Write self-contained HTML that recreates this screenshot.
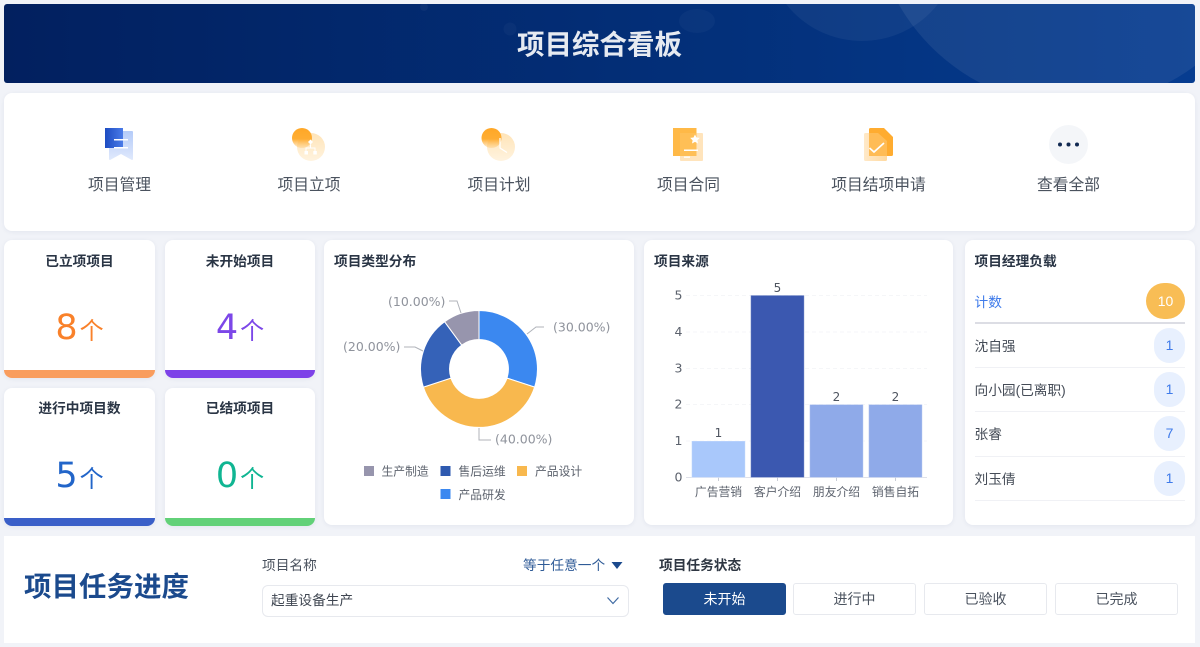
<!DOCTYPE html>
<html lang="zh"><head><meta charset="utf-8"><title>项目综合看板</title>
<style>
*{box-sizing:border-box}
html,body{margin:0;padding:0;width:1200px;height:647px;overflow:hidden;background:#f1f3f8;font-family:"Liberation Sans","Noto Sans CJK SC",sans-serif;color:#2b3644}
.a{position:absolute}
.box{position:absolute;background:#fff;border-radius:8px;box-shadow:0 1px 5px rgba(40,60,110,.07);overflow:hidden}
.t{position:absolute;white-space:nowrap;line-height:20px}
.ttl{font-size:13.7px;font-weight:700;color:#2a3545}
.nav{position:absolute;top:176px;width:140px;text-align:center;font-size:15.75px;line-height:20px;color:#4a525e}
.card .ttl{position:absolute;left:0;right:0;top:11px;text-align:center;line-height:20px}
.card .num{position:absolute;left:0;right:0;top:58px;text-align:center;font-size:35px;line-height:60px;font-family:"DejaVu Sans","Noto Sans CJK SC",sans-serif;font-weight:400;white-space:nowrap}
.card .num span{font-family:"Noto Sans CJK SC",sans-serif;font-size:24px;margin-left:2px;font-weight:400}
.card .bar{position:absolute;left:0;right:0;bottom:0;height:8px}
.row{position:absolute;left:9.5px;width:210.5px;height:44px;border-bottom:1px solid #f0f1f5;font-size:13.7px;line-height:46px;color:#454c57;white-space:nowrap}
.pill{position:absolute;right:0;top:4px;width:31px;height:35px;border-radius:16px;background:#e8f0fe;color:#3f7bea;font-size:14px;line-height:35px;text-align:center}
.btn{position:absolute;top:583px;width:123px;height:32px;border:1px solid #e7e9ee;border-radius:3px;background:#fff;text-align:center;font-size:14px;line-height:30px;color:#4a525e}
</style></head><body>

<div class="a" style="left:4px;top:4px;width:1191px;height:79px;border-radius:3px;overflow:hidden;background:linear-gradient(90deg,#02205f 0%,#03307a 60%,#063c90 100%)">
<svg class="a" style="left:0;top:0" width="1191" height="79" viewBox="0 0 1191 79">
<circle cx="858" cy="-59.600" r="96.600" fill="#fff" opacity=".05"/>
<circle cx="1070" cy="-100" r="202" fill="#fff" opacity=".07"/>
<ellipse cx="693" cy="17" rx="18" ry="12" fill="#fff" opacity=".03"/>
<circle cx="506" cy="25" r="6.500" fill="#fff" opacity=".03"/>
<circle cx="420" cy="3" r="4" fill="#fff" opacity=".04"/>
</svg>
<div class="t" style="left:0;width:1191px;top:23px;line-height:36px;text-align:center;font-size:27.5px;font-weight:700;color:#e6eaf1">项目综合看板</div>
</div>

<div class="box" style="left:4px;top:93px;width:1191px;height:138px"></div>

<svg class="a" style="left:0;top:0;z-index:2" width="1200" height="200" viewBox="0 0 1200 200">
<defs>
<linearGradient id="g1" x1="0" y1="0" x2="1" y2="0"><stop offset="0" stop-color="#1d4cc2"/><stop offset="1" stop-color="#4a7be8"/></linearGradient>
<linearGradient id="g2" x1="0" y1="0" x2="0" y2="1"><stop offset="0" stop-color="#b4cbf9"/><stop offset="1" stop-color="#e0e9fc"/></linearGradient>
<linearGradient id="g3" x1="0" y1="0" x2="0" y2="1"><stop offset="0" stop-color="#ffa726"/><stop offset=".55" stop-color="#ffad33"/><stop offset="1" stop-color="#ffc261" stop-opacity=".3"/></linearGradient>
<linearGradient id="g4" x1="0" y1="0" x2="0" y2="1"><stop offset="0" stop-color="#ffe4b8"/><stop offset="1" stop-color="#fff3df"/></linearGradient>
<linearGradient id="g5" x1="0" y1="0" x2="1" y2="0"><stop offset="0" stop-color="#ffe9c8"/><stop offset="1" stop-color="#ffd9a0"/></linearGradient>
</defs>
<!-- manage -->
<path d="M109 131H132a1 1 0 0 1 1 1V159a1 1 0 0 1-1.500.8L121 154 110.500 159.800a1 1 0 0 1-1.500-.8Z" fill="url(#g2)"/>
<path d="M105 128H123V148H105Z" fill="url(#g1)"/>
<rect x="114" y="139" width="14" height="1.500" fill="#fff"/><rect x="114" y="147" width="14" height="1.500" fill="#fff"/>
<!-- setup -->
<circle cx="311" cy="147" r="14" fill="url(#g4)"/>
<circle cx="302" cy="138" r="10" fill="url(#g3)"/>
<path d="M310.500 139.500l2.500 2.500-2.500 2.500-2.500-2.500Z" fill="#fff"/>
<path d="M310.500 144.500v3M306 151v-3h9v3" fill="none" stroke="#fff" stroke-width="1"/>
<rect x="304.500" y="151" width="3.500" height="3.500" fill="#fff"/><rect x="313.300" y="151" width="3.500" height="3.500" fill="#fff"/>
<!-- plan -->
<circle cx="501" cy="147" r="14" fill="url(#g4)"/>
<circle cx="491.500" cy="138" r="10" fill="url(#g3)"/>
<path d="M500 138V148L507 152.500" fill="none" stroke="#fff" stroke-width="1.300"/>
<!-- contract -->
<rect x="680" y="133" width="23" height="28" rx="1" fill="#ffe4bc"/>
<rect x="673" y="128" width="23.500" height="28" fill="#ffb53d" opacity=".95"/>
<rect x="680" y="133" width="16.500" height="23" fill="#ffc25e" opacity=".7"/>
<path d="M695 134.500l1.500 3 3.300.4-2.400 2.300.6 3.300-3-1.600-3 1.600.6-3.300-2.400-2.300 3.300-.4Z" fill="#fff"/>
<rect x="684" y="149.500" width="14" height="1.500" fill="#fff"/><rect x="684" y="156.500" width="6" height="1.300" fill="#fff"/>
<!-- close -->
<path d="M864 134.500a1.500 1.500 0 0 1 1.500-1.500H878L887 141V159.500a1.500 1.500 0 0 1-1.500 1.500H865.500a1.500 1.500 0 0 1-1.500-1.500Z" fill="url(#g5)"/>
<path d="M869 129.500a1.500 1.500 0 0 1 1.500-1.500H884L893 137V154.500a1.500 1.500 0 0 1-1.500 1.500H869Z" fill="#ffac30"/>
<path d="M869 133H878L887 141V156H869Z" fill="#ffc163" opacity=".75"/>
<path d="M869.500 148l4.500 4 10-9" fill="none" stroke="#fff" stroke-width="1.700"/>
<!-- more -->
<circle cx="1068.500" cy="144.500" r="19.500" fill="#f4f6f9"/>
<circle cx="1060" cy="144.500" r="2" fill="#122a52"/><circle cx="1068.500" cy="144.500" r="2" fill="#122a52"/><circle cx="1077" cy="144.500" r="2" fill="#122a52"/>
</svg>

<div class="nav" style="left:49.500px">项目管理</div>
<div class="nav" style="left:239px">项目立项</div>
<div class="nav" style="left:429px">项目计划</div>
<div class="nav" style="left:618.500px">项目合同</div>
<div class="nav" style="left:808.500px">项目结项申请</div>
<div class="nav" style="left:998.500px">查看全部</div>

<div class="box card" style="left:4px;top:240px;width:151px;height:138px"><div class="ttl" style="top:12px">已立项项目</div><div class="num" style="color:#f9812a">8<span>个</span></div><div class="bar" style="background:#f99d5e"></div></div>
<div class="box card" style="left:165px;top:240px;width:150px;height:138px"><div class="ttl" style="top:12px">未开始项目</div><div class="num" style="color:#7c47e8">4<span>个</span></div><div class="bar" style="background:#7d42e8"></div></div>
<div class="box card" style="left:4px;top:388px;width:151px;height:138px"><div class="ttl">进行中项目数</div><div class="num" style="color:#2265c9">5<span>个</span></div><div class="bar" style="background:#3a5fc8"></div></div>
<div class="box card" style="left:165px;top:388px;width:150px;height:138px"><div class="ttl">已结项项目</div><div class="num" style="color:#10b592">0<span>个</span></div><div class="bar" style="background:#62d178"></div></div>

<div class="box" style="left:324px;top:240px;width:310px;height:285px"><div class="t ttl" style="left:10px;top:12px">项目类型分布</div></div>
<svg class="a" style="left:324px;top:240px" width="310" height="285" viewBox="0 0 310 285" font-family="'DejaVu Sans','Noto Sans CJK SC',sans-serif">
<g stroke="#fff" stroke-width="1">
<path d="M155 70.500A58.500 58.500 0 0 1 210.600 147.100L183 138.100A29.500 29.500 0 0 0 155 99.500Z" fill="#3b88f0"/>
<path d="M210.600 147.100A58.500 58.500 0 0 1 99.400 147.100L127 138.100A29.500 29.500 0 0 0 183 138.100Z" fill="#f8b84e"/>
<path d="M99.400 147.100A58.500 58.500 0 0 1 120.600 81.700L137.700 105.100A29.500 29.500 0 0 0 127 138.100Z" fill="#3562b8"/>
<path d="M120.600 81.700A58.500 58.500 0 0 1 155 70.500V99.500A29.500 29.500 0 0 0 137.700 105.100Z" fill="#9795ad"/>
</g>
<g fill="none" stroke="#b0b3ba" stroke-width="1">
<path d="M203 94L212 87H220"/><path d="M155 188V200H167"/><path d="M80 107H91L99 111"/><path d="M125 61H133L137 73"/>
</g>
<g font-size="12.500" fill="#8f939c">
<text x="229" y="91.500">(30.00%)</text><text x="171" y="203.500">(40.00%)</text><text x="19" y="111">(20.00%)</text><text x="64" y="66">(10.00%)</text>
</g>
<g font-family="'Liberation Sans','Noto Sans CJK SC',sans-serif" font-size="11.800" fill="#5d636e">
<rect x="40" y="226" width="10" height="10" fill="#9795ad"/><text x="57.500" y="235.500">生产制造</text>
<rect x="116.500" y="226" width="10" height="10" fill="#2e5ab0"/><text x="134.500" y="235.500">售后运维</text>
<rect x="193" y="226" width="10" height="10" fill="#f8b84e"/><text x="211" y="235.500">产品设计</text>
<rect x="116.500" y="249" width="10" height="10" fill="#3b88f0"/><text x="134.500" y="259">产品研发</text>
</g>
</svg>

<div class="box" style="left:644px;top:240px;width:309px;height:285px"><div class="t ttl" style="left:10px;top:12px">项目来源</div></div>
<svg class="a" style="left:644px;top:240px" width="309" height="285" viewBox="0 0 309 285" font-family="'DejaVu Sans','Noto Sans CJK SC',sans-serif">
<g stroke="#f5f6f8" stroke-width="1" stroke-dasharray="4 3">
<path d="M42 55.500H283M42 92H283M42 128.500H283M42 164.500H283M42 201H283"/>
</g>
<path d="M42 237.500H283" stroke="#dfe1e9"/>
<path d="M74.500 237.500v3.500M133.500 237.500v3.500M192.500 237.500v3.500M251.500 237.500v3.500" stroke="#c9ccd6"/>
<g stroke="#fff" stroke-opacity=".3">
<rect x="47.700" y="201" width="53.500" height="36.500" fill="#a9c8fb"/>
<rect x="106.700" y="55.300" width="53.500" height="182.200" fill="#3b58b0"/>
<rect x="165.700" y="164.500" width="53.500" height="73" fill="#8faae9"/>
<rect x="224.700" y="164.500" width="53.500" height="73" fill="#8faae9"/>
</g>
<g font-size="12" fill="#4f5560" text-anchor="middle">
<text x="74.500" y="197">1</text><text x="133.500" y="52">5</text><text x="192.500" y="161">2</text><text x="251.500" y="161">2</text>
</g>
<g font-size="12.500" fill="#5b616c" text-anchor="end">
<text x="38.500" y="59.500">5</text><text x="38.500" y="96">4</text><text x="38.500" y="132.500">3</text><text x="38.500" y="168.500">2</text><text x="38.500" y="205">1</text><text x="38.500" y="241.500">0</text>
</g>
<g font-family="'Liberation Sans','Noto Sans CJK SC',sans-serif" font-size="11.800" fill="#5d636e" text-anchor="middle">
<text x="74.500" y="256">广告营销</text><text x="133.500" y="256">客户介绍</text><text x="192.500" y="256">朋友介绍</text><text x="251.500" y="256">销售自拓</text>
</g>
</svg>

<div class="box" style="left:965px;top:240px;width:230px;height:285px">
<div class="t ttl" style="left:9.500px;top:12px">项目经理负载</div>
<div class="row" style="top:40px;height:44px;border-bottom:2px solid #dcdde4;color:#3f7bea;">计数<div class="pill" style="right:0;top:3px;width:39px;height:36px;border-radius:18px;background:#f8bd55;color:#fff;line-height:37px">10</div></div>
<div class="row" style="top:84px">沈自强<div class="pill">1</div></div>
<div class="row" style="top:128px">向小园(已离职)<div class="pill">1</div></div>
<div class="row" style="top:172px;height:45px;">张睿<div class="pill">7</div></div>
<div class="row" style="top:217px">刘玉倩<div class="pill">1</div></div>
</div>

<div class="a" style="left:4px;top:536px;width:1191px;height:107px;background:#fff"></div>
<div class="t" style="left:24px;top:569px;line-height:36px;font-size:27.5px;font-weight:700;color:#1b4a8d">项目任务进度</div>
<div class="t" style="left:262px;top:556px;font-size:13.7px;color:#4a525e">项目名称</div>
<div class="t" style="left:523px;top:556px;font-size:13.7px;color:#2f5b97">等于任意一个</div>
<svg class="a" style="left:611px;top:561px" width="12" height="10" viewBox="0 0 12 10"><path d="M0.500 1H11.500L6 8Z" fill="#1b4a8d"/></svg>
<div class="a" style="left:262px;top:585px;width:367px;height:32px;border:1px solid #e7e9ee;border-radius:6px;background:#fff"></div>
<div class="t" style="left:271px;top:591px;font-size:13.700px;color:#3f4651">起重设备生产</div>
<svg class="a" style="left:606px;top:596px" width="14" height="10" viewBox="0 0 14 10"><path d="M1.500 1.500L7 7.500 12.500 1.500" fill="none" stroke="#3f6aa3" stroke-width="1.200"/></svg>

<div class="t" style="left:659px;top:556px;font-size:13.700px;font-weight:700;color:#2f3743">项目任务状态</div>
<div class="btn" style="left:663px;background:#1b4a8d;border-color:#1b4a8d;color:#fff">未开始</div>
<div class="btn" style="left:793px">进行中</div>
<div class="btn" style="left:924px">已验收</div>
<div class="btn" style="left:1055px">已完成</div>

</body></html>
